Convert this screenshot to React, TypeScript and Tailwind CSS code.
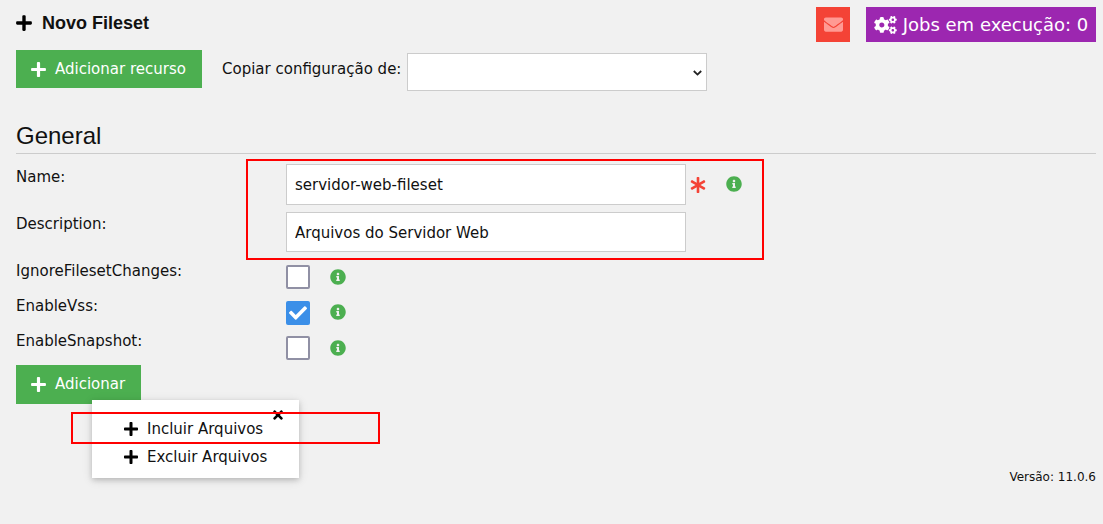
import { FaAsterisk, FaCheck, FaCogs, FaEnvelope, FaInfoCircle, FaPlus, FaTimes } from 'react-icons/fa'

const dejavu = "font-['DejaVu_Sans',sans-serif]"

const InfoIcon = () => <FaInfoCircle className="h-4 w-4 text-[#4caf50]" aria-hidden="true" />

const CheckRow = ({ label, checked, height, labelClass }: { label: string; checked?: boolean; height: string; labelClass: string }) => (
	<div className={`flex ${height}`}>
		<label className={`w-[270px] text-[15px] leading-5 text-[#111] ${labelClass}`}>{label}</label>
		<div className="flex h-6 items-center">
			{checked ? (
				<span className="flex h-6 w-6 items-center justify-center rounded-[2px] bg-[#3b8fe8]">
					<FaCheck className="h-[18px] w-[18px] text-white" aria-hidden="true" />
				</span>
			) : (
				<span className="h-6 w-6 rounded-[2px] border-2 border-[#9090a4] bg-white" />
			)}
			<span className={checked ? 'ml-5 -mt-0.5 flex' : 'ml-5 flex'}>
				<InfoIcon />
			</span>
		</div>
	</div>
)

export default function App() {
	return (
		<div className={`relative h-[524px] w-[1103px] overflow-hidden bg-[#f1f1f1] pl-4 pr-[7px] ${dejavu}`}>
			{/* Header */}
			<div className="flex h-[50px] items-start justify-between">
				<div className="flex items-center pt-3.5 font-['Liberation_Sans',sans-serif] text-lg font-bold leading-[18px] text-[#111]">
					<FaPlus className="-ml-px mr-[9px] h-[18px] w-[18px] text-black" aria-hidden="true" />
					<span>Novo Fileset</span>
				</div>
				<div className="mt-[7px] flex gap-4">
					<div className="flex h-[35px] w-[34px] items-center justify-center bg-[#f44336]">
						<FaEnvelope className="h-[19px] w-[19px] text-[#ff9a93]" aria-hidden="true" />
					</div>
					<div className="flex h-[35px] w-[230px] items-center justify-center gap-[6px] bg-[#9c27b0] text-lg text-white">
						<FaCogs className="h-[18px] w-[23px]" aria-hidden="true" />
						<span>Jobs em execução: 0</span>
					</div>
				</div>
			</div>

			{/* Actions */}
			<div className="flex items-start">
				<button className="flex h-[38px] w-[186px] items-center gap-2 bg-[#4caf50] pl-[14px] text-[15px] text-white">
					<FaPlus className="h-[17px] w-[17px]" aria-hidden="true" />
					<span>Adicionar recurso</span>
				</button>
				<div className="ml-5 mt-[3px] flex items-start gap-[6px]">
					<label className="pt-1.5 text-[15px] leading-5 text-[#111]">Copiar configuração de:</label>
					<div className="relative">
						<select className="block h-[38px] w-[300px] appearance-none border border-[#ccc] bg-white text-[15px]" />
						<svg
							className="pointer-events-none absolute right-[5px] top-[17px] h-[6px] w-[9px] text-[#222]"
							viewBox="0 0 9 6"
							fill="none"
							stroke="currentColor"
							strokeWidth="1.8"
							aria-hidden="true"
						>
							<path d="M0.8 1 4.5 4.6 8.2 1" />
						</svg>
					</div>
				</div>
			</div>

			{/* General */}
			<h3 className="mt-7 h-[35px] border-b border-[#ccc] font-['Liberation_Sans',sans-serif] text-2xl leading-[33px] text-[#111]">
				General
			</h3>

			<div className="mt-[10px] flex h-[48px]">
				<label className="w-[270px] pt-[3px] text-[15px] leading-5 text-[#111]">Name:</label>
				<input
					readOnly
					value="servidor-web-fileset"
					className="h-[41px] w-[400px] border border-[#ccc] bg-white px-2 text-[15px] text-[#111]"
				/>
				<FaAsterisk className="ml-1 mt-[13px] h-4 w-4 text-[#f44336]" aria-hidden="true" />
				<span className="ml-5 mt-3 flex">
					<InfoIcon />
				</span>
			</div>
			<div className="flex h-[53px]">
				<label className="w-[270px] pt-0.5 text-[15px] leading-5 text-[#111]">Description:</label>
				<input
					readOnly
					value="Arquivos do Servidor Web"
					className="h-10 w-[400px] border border-[#ccc] bg-white px-2 pt-px text-[15px] text-[#111]"
				/>
			</div>

			<CheckRow label="IgnoreFilesetChanges:" height="h-9" labelClass="-mt-1" />
			<CheckRow label="EnableVss:" checked height="h-[35px]" labelClass="-mt-[5px]" />
			<CheckRow label="EnableSnapshot:" height="h-[29px]" labelClass="-mt-[5px]" />

			<button className="flex h-[39px] w-[125px] items-center gap-2 bg-[#4caf50] pl-[14px] text-[15px] text-white">
				<FaPlus className="h-[17px] w-[17px]" aria-hidden="true" />
				<span>Adicionar</span>
			</button>

			<p className="absolute right-[7px] top-[469px] text-xs leading-4 text-[#111]">Versão: 11.0.6</p>

			{/* Dropdown menu */}
			<div className="absolute left-[92px] top-[400px] h-[78px] w-[207px] bg-white pl-[31px] pt-[15px] text-[15px] text-[#111] shadow-[0_2px_5px_rgba(0,0,0,0.16),0_2px_10px_rgba(0,0,0,0.12)]">
				<FaTimes className="absolute right-[14px] top-2 h-[14px] w-[14px] text-black" aria-hidden="true" />
				<div className="flex h-7 items-center">
					<FaPlus className="mr-2 h-4 w-4 text-black" aria-hidden="true" />
					<span>Incluir Arquivos</span>
				</div>
				<div className="flex h-7 items-center">
					<FaPlus className="mr-2 h-4 w-4 text-black" aria-hidden="true" />
					<span>Excluir Arquivos</span>
				</div>
			</div>

			{/* Red annotation boxes */}
			<div className="pointer-events-none absolute left-[246px] top-[159px] h-[101px] w-[518px] border-2 border-[#f00]" />
			<div className="pointer-events-none absolute left-[71px] top-[412px] h-8 w-[309px] border-2 border-[#f00]" />
		</div>
	)
}
